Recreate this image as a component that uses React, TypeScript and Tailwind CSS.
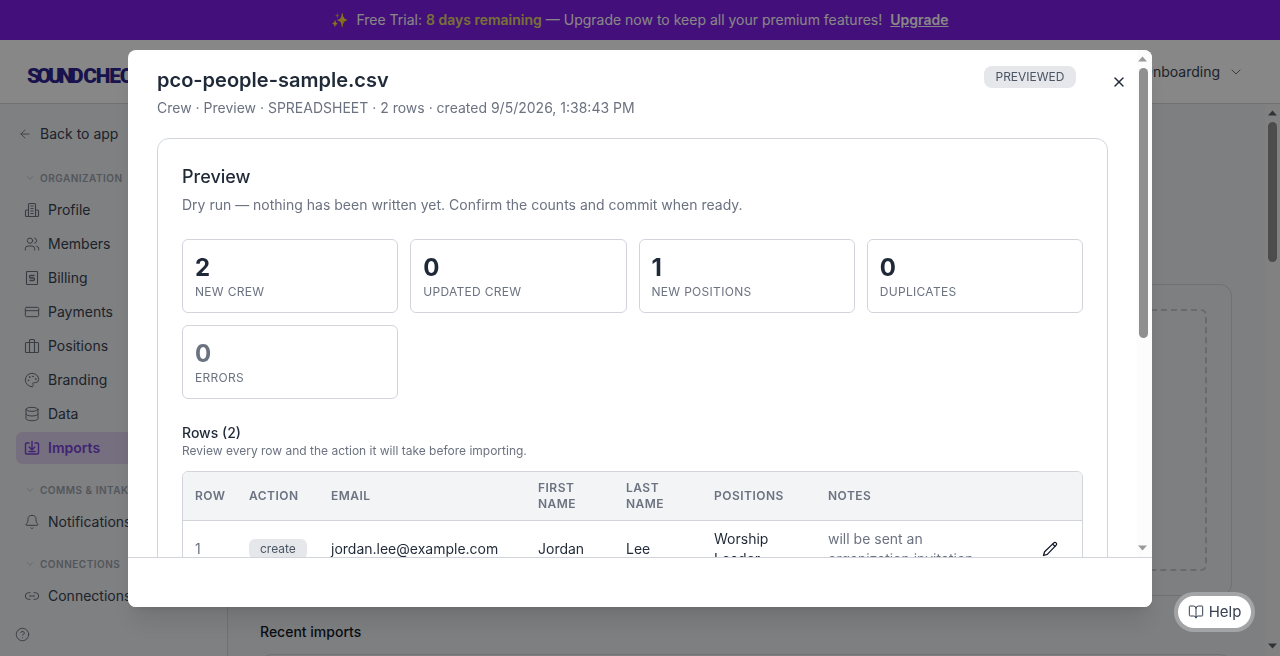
import React from "react";
import {
  ArrowLeft, ChevronDown, Users, CreditCard, Palette, Database, Bell, Link2, CircleHelp, X, BookOpen,
} from "lucide-react";

const sw = 1.5;

function BuildingIcon() {
  return (
    <svg width="16" height="16" viewBox="0 0 16 16" fill="none" stroke="currentColor" strokeWidth="1.1" strokeLinejoin="round" className="shrink-0">
      <path d="M4.5 14.5V2.5a1 1 0 0 1 1-1h5a1 1 0 0 1 1 1v12z" />
      <path d="M4.5 8H2.5a1 1 0 0 0-1 1v4.5a1 1 0 0 0 1 1h11a1 1 0 0 0 1-1V9a1 1 0 0 0-1-1h-2" />
      <path d="M6.5 4h3M6.5 6.5h3M6.5 9h3M6.5 11.5h3" />
    </svg>
  );
}
function BillingIcon() {
  return (
    <svg width="16" height="16" viewBox="0 0 16 16" fill="none" stroke="currentColor" strokeWidth="1.1" className="shrink-0">
      <rect x="2.5" y="1.5" width="11" height="13" rx="0.8" />
      <path d="M10.5 5.5H6.7a1.2 1.2 0 0 0 0 2.5h2.6a1.2 1.2 0 0 1 0 2.5H5.5" strokeWidth="1.3" />
    </svg>
  );
}
function PositionsIcon() {
  return (
    <svg width="16" height="16" viewBox="0 0 16 16" fill="none" stroke="currentColor" strokeWidth="1.1" strokeLinejoin="round" className="shrink-0">
      <rect x="1.5" y="4.5" width="13" height="10" rx="1" />
      <path d="M5.5 4.5V2.5a1 1 0 0 1 1-1h3a1 1 0 0 1 1 1v2M5.5 4.5v10M10.5 4.5v10" />
    </svg>
  );
}
function ImportsIcon() {
  return (
    <svg width="16" height="16" viewBox="0 0 16 16" fill="none" stroke="currentColor" strokeWidth="1.4" strokeLinecap="round" strokeLinejoin="round" className="shrink-0">
      <path d="M5 3H2.5a1 1 0 0 0-1 1v9a1 1 0 0 0 1 1h11a1 1 0 0 0 1-1V4a1 1 0 0 0-1-1H11" />
      <path d="M8 1.5v8M5.2 7 8 9.8 10.8 7M5 11.5h6" />
    </svg>
  );
}
function PencilIcon() {
  return (
    <svg width="16" height="16" viewBox="0 0 16 16" fill="none" stroke="currentColor" strokeWidth="1.3" strokeLinejoin="round" strokeLinecap="round">
      <path d="M12.1 1.6a1.7 1.7 0 0 1 2.3 2.3L5.3 13.4l-3.8 1.1 1.1-3.8z" />
      <path d="M10.7 3.1l2.2 2.2" />
    </svg>
  );
}

function Section({ label }: { label: string }) {
  return (
    <div className="flex items-center h-4 pl-[25px] gap-[5px] text-[#9ca3af] whitespace-nowrap">
      <ChevronDown size={10} strokeWidth={1.5} className="shrink-0" />
      <span className="text-[10px] font-semibold tracking-[0.05em] uppercase">{label}</span>
    </div>
  );
}

function NavItem({ icon, label, active }: { icon: React.ReactNode; label: string; active?: boolean }) {
  return (
    <div
      className={
        active
          ? "flex items-center h-8 ml-4 mr-2 pl-2 gap-2 rounded-md bg-[#dfd1f1] font-semibold text-sm whitespace-nowrap"
          : "flex items-center h-8 ml-4 mr-2 pl-2 gap-2 text-sm whitespace-nowrap text-[#374151]"
      }
    >
      <span className={active ? "text-[#7a45d8]" : "text-[#6b7280]"}>{icon}</span>
      <span className={active ? "text-[#7a45d8]" : ""}>{label}</span>
    </div>
  );
}

function Stat({ value, label, muted }: { value: string; label: string; muted?: boolean }) {
  return (
    <div className="h-[74px] rounded-md border border-[#d1d5db] px-3 pt-3">
      <div className={muted ? "text-2xl leading-8 font-bold text-[#6b7280]" : "text-2xl leading-8 font-bold text-[#1f2937]"}>{value}</div>
      <div className="text-xs leading-4 tracking-[0.025em] uppercase text-[#6b7280]">{label}</div>
    </div>
  );
}

const headCell = "px-3 py-2 text-left text-xs leading-4 font-semibold tracking-[0.04em] uppercase text-[#6b7280] align-middle";

function Row({ n, email, first, last, pos, notes }: { n: string; email: string; first: string; last: string; pos: string; notes: string }) {
  return (
    <tr className="border-t border-[#d1d5db]">
      <td className="px-3 py-2 text-sm text-[#6b7280]">{n}</td>
      <td className="px-3 py-2">
        <span className="flex w-fit items-center h-5 px-[11px] rounded-md bg-[#e5e7eb] text-xs text-[#4b5563]">create</span>
      </td>
      <td className="px-3 py-2 text-sm text-[#1f2937]">{email}</td>
      <td className="px-3 py-2 text-sm text-[#1f2937]">{first}</td>
      <td className="px-3 py-2 text-sm text-[#1f2937]">{last}</td>
      <td className="px-3 py-2 text-sm text-[#1f2937]">{pos}</td>
      <td className="px-3 py-2 text-sm text-[#6b7280]"><div className="max-w-[160px]">{notes}</div></td>
      <td className="px-3 py-2 text-[#111827]">
        <PencilIcon />
      </td>
    </tr>
  );
}

function Arrow({ up, className }: { up?: boolean; className: string }) {
  return (
    <svg width="9" height="6" viewBox="0 0 9 6" className={className} fill="currentColor">
      <path d={up ? "M4.5 0.5 9 5.5H0z" : "M4.5 5.5 9 0.5H0z"} />
    </svg>
  );
}

export default function App() {
  return (
    <div className="h-[656px] overflow-hidden flex flex-col bg-white font-['Inter',sans-serif]">
      <div className="h-10 shrink-0 flex items-center justify-center gap-1 bg-[#7f1ee6] text-sm text-white">
        <span className="mr-1">✨</span>
        <span>
          Free Trial: <span className="font-semibold text-[#e0d56a]">8 days remaining</span> — Upgrade now to keep all your premium features!
        </span>
        <span className="ml-1 font-semibold underline">Upgrade</span>
      </div>
      <header className="h-16 shrink-0 flex items-center justify-between border-b border-[#d1d5db] pl-[27px] pr-9 bg-white">
        <div className="mt-2 flex gap-[3px] text-[21px] leading-6 font-black text-[#2e2490] whitespace-nowrap font-['Roboto',sans-serif]">
          <span className="tracking-[-0.16em]">SOUND</span>
          <span className="tracking-[-0.06em]">CHECK</span>
        </div>
        <div className="flex items-center gap-2 text-sm text-[#374151]">
          <span>Onboarding</span>
          <ChevronDown size={16} strokeWidth={1.5} className="text-[#6b7280]" />
        </div>
      </header>
      <div className="flex-1 min-h-0 flex">
        <aside className="w-[228px] shrink-0 flex flex-col border-r border-[#d1d5db] bg-[#f0f2f4]">
          <div className="flex items-center h-5 mt-5 pl-[18px] gap-2 text-sm text-[#374151]">
            <ArrowLeft size={14} strokeWidth={sw} className="text-[#6b7280]" />
            <span>Back to app</span>
          </div>
          <div className="mt-[26px]"><Section label="Organization" /></div>
          <div className="mt-[8px] flex flex-col gap-[2px]">
            <NavItem icon={<BuildingIcon />} label="Profile" />
            <NavItem icon={<Users size={16} strokeWidth={sw} />} label="Members" />
            <NavItem icon={<BillingIcon />} label="Billing" />
            <NavItem icon={<CreditCard size={16} strokeWidth={sw} />} label="Payments" />
            <NavItem icon={<PositionsIcon />} label="Positions" />
            <NavItem icon={<Palette size={16} strokeWidth={sw} />} label="Branding" />
            <NavItem icon={<Database size={16} strokeWidth={sw} />} label="Data" />
            <NavItem icon={<ImportsIcon />} label="Imports" active />
          </div>
          <div className="mt-[18px]"><Section label="Comms & Intake" /></div>
          <div className="mt-[8px]"><NavItem icon={<Bell size={16} strokeWidth={sw} />} label="Notifications" /></div>
          <div className="mt-[18px]"><Section label="Connections" /></div>
          <div className="mt-[8px]"><NavItem icon={<Link2 size={16} strokeWidth={sw} />} label="Connections" /></div>
          <div className="mt-[15px] pl-[15px] text-[#6b7280]"><CircleHelp size={15} strokeWidth={sw} /></div>
        </aside>
        <main className="relative flex-1 min-w-0 overflow-hidden pl-8 pr-12 bg-[#eef0f2]">
          <div className="pt-6 h-[180px]">
            <h1 className="text-2xl font-semibold text-[#111827]">Imports</h1>
            <p className="text-sm text-[#6b7280]">Upload a spreadsheet to add crew and positions.</p>
          </div>
          <div className="h-[312px] rounded-xl border border-[#d1d5db] p-6">
            <div className="h-full rounded-md border-2 border-dashed border-[#c4c8cf]" />
          </div>
          <h2 className="mt-[26px] text-sm font-medium leading-5 text-[#111827]">Recent imports</h2>
          <div className="mt-3 h-[400px] rounded-xl border border-[#d1d5db]" />
          <div className="absolute right-0 top-0 bottom-0 w-[15px] bg-[#f3f4f6]">
            <Arrow up className="absolute left-[3px] top-[6px] text-[#5e6063]" />
            <div className="absolute left-[3px] top-[18px] w-[9px] h-[140px] rounded-full bg-[#909090]" />
            <Arrow className="absolute left-[3px] top-[539px] text-[#5e6063]" />
          </div>
        </main>
      </div>

      <div className="fixed inset-0 bg-black/[0.47]" />

      <div className="fixed left-[128px] top-[50px] w-[1024px] h-[557px] flex flex-col rounded-lg bg-white shadow-xl overflow-hidden">
        <div className="relative flex-1 min-h-0 overflow-hidden pl-[29px] pr-[44px] pt-4">
          <div className="flex items-start justify-between">
            <div>
              <h2 className="text-xl leading-7 font-semibold text-[#1f2937]">pco-people-sample.csv</h2>
              <p className="mt-[4px] text-sm leading-5 text-[#6b7280]">Crew · Preview · SPREADSHEET · 2 rows · created 9/5/2026, 1:38:43 PM</p>
            </div>
            <span className="inline-flex items-center justify-center w-[92px] h-[22px] mr-8 rounded-lg bg-[#e5e7eb] text-xs text-[#4b5563]">PREVIEWED</span>
          </div>
          <section className="mt-[20px] rounded-xl border border-[#d1d5db] p-6">
            <h3 className="text-lg leading-7 font-medium text-[#1f2937]">Preview</h3>
            <p className="mt-[4px] text-sm leading-5 text-[#6b7280]">Dry run — nothing has been written yet. Confirm the counts and commit when ready.</p>
            <div className="mt-6 grid grid-cols-4 gap-3">
              <Stat value="2" label="New crew" />
              <Stat value="0" label="Updated crew" />
              <Stat value="1" label="New positions" />
              <Stat value="0" label="Duplicates" />
              <Stat value="0" label="Errors" muted />
            </div>
            <h4 className="mt-6 text-sm leading-5 font-medium text-[#1f2937]">Rows (2)</h4>
            <p className="text-xs leading-4 text-[#6b7280]">Review every row and the action it will take before importing.</p>
            <div className="mt-3 rounded-md border border-[#d1d5db] overflow-hidden">
              <table className="w-full table-fixed border-collapse">
                <colgroup>
                  <col className="w-[54px]" />
                  <col className="w-[82px]" />
                  <col className="w-[207px]" />
                  <col className="w-[88px]" />
                  <col className="w-[88px]" />
                  <col className="w-[114px]" />
                  <col className="w-[214px]" />
                  <col />
                </colgroup>
                <thead className="bg-[#f3f4f6]">
                  <tr className="h-[48px]">
                    <th className={headCell}>Row</th>
                    <th className={headCell}>Action</th>
                    <th className={headCell}>Email</th>
                    <th className={headCell}>First name</th>
                    <th className={headCell}>Last name</th>
                    <th className={headCell}>Positions</th>
                    <th className={headCell}>Notes</th>
                    <th className={headCell}></th>
                  </tr>
                </thead>
                <tbody>
                  <Row n="1" email="jordan.lee@example.com" first="Jordan" last="Lee" pos="Worship Leader" notes="will be sent an organization invitation" />
                </tbody>
              </table>
            </div>
          </section>
          <button className="absolute right-[25px] top-6 text-[#1f2937]">
            <X size={16} strokeWidth={2} />
          </button>
          <div className="absolute right-0 top-0 bottom-0 w-[15px] bg-[#fcfcfc]">
            <Arrow up className="absolute left-[1px] top-[6px] text-[#9a9a9a]" />
            <div className="absolute left-[2px] top-[18px] w-[9px] h-[270px] rounded-full bg-[#8f8f8f]" />
            <Arrow className="absolute left-[1px] top-[495px] text-[#9a9a9a]" />
          </div>
        </div>
        <div className="h-[50px] shrink-0 border-t border-[#d1d5db] bg-white" />
      </div>

      <button className="fixed left-[1178px] top-[596px] w-[73px] h-[32px] flex items-center justify-center gap-[5px] rounded-full bg-white ring-4 ring-[#a3a4a6] text-[15px] text-[#374151]">
        <BookOpen size={16} strokeWidth={1.5} />
        <span>Help</span>
      </button>
    </div>
  );
}
